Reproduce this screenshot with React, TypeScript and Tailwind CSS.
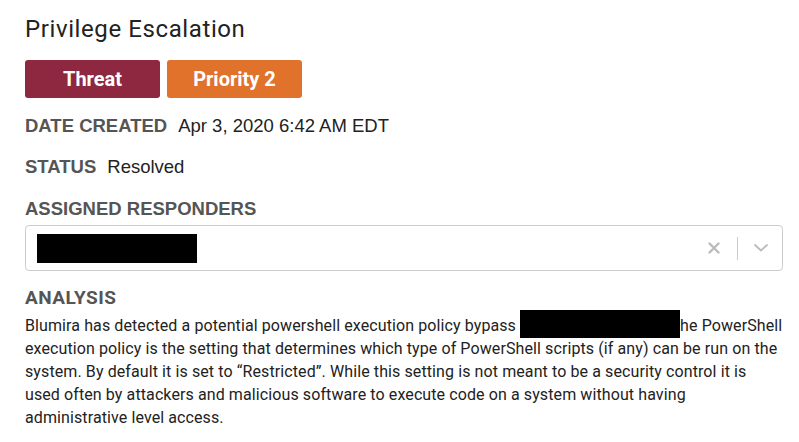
import React from "react";

const labelFont = { fontFamily: '"Liberation Sans", Arial, sans-serif' };

const Field = ({ label, value }: { label: string; value: string }) => (
  <div className="flex items-center h-[24px] gap-[11px]" style={labelFont}>
    <span className="text-[18.5px] font-bold text-[#555555]">{label}</span>
    <span className="text-[18.5px] text-[#222222]">{value}</span>
  </div>
);

export default function App() {
  const badges = [
    { name: "Threat", cls: "bg-[#8e2840]" },
    { name: "Priority 2", cls: "bg-[#e0722c]" },
  ];

  return (
    <div
      className="w-[799px] h-[442px] bg-white pl-[25px] pr-[16px] pt-[15px] overflow-hidden"
      style={{ fontFamily: "Roboto, sans-serif" }}
    >
      <h1 className="text-[24px] leading-[28px] tracking-[0.6px] text-[#222222]">
        Privilege Escalation
      </h1>

      <div className="flex gap-[7px] mt-[17px]">
        {badges.map((b) => (
          <div
            key={b.name}
            className={`${b.cls} w-[135px] h-[38px] rounded-[3px] flex items-center justify-center text-white text-[20px] font-bold`}
          >
            {b.name}
          </div>
        ))}
      </div>

      <div className="mt-[16px]">
        <Field label="DATE CREATED" value="Apr 3, 2020 6:42 AM EDT" />
      </div>
      <div className="mt-[17px]">
        <Field label="STATUS" value="Resolved" />
      </div>

      <div
        className="mt-[18px] h-[24px] flex items-center text-[18.5px] font-bold text-[#555555]"
        style={labelFont}
      >
        ASSIGNED RESPONDERS
      </div>

      <div className="mt-[4px] h-[46px] border border-[#cccccc] rounded-[4px] flex items-center pl-[11px] pr-[14px]">
        <div className="w-[160px] h-[29px] bg-black" />
        <div className="ml-auto flex items-center">
          <svg width="12" height="12" viewBox="0 0 12 12" className="mr-[17px]">
            <path
              d="M1.5 1.5 L10.5 10.5 M10.5 1.5 L1.5 10.5"
              stroke="#bbbbbb"
              strokeWidth="2.4"
              strokeLinecap="round"
            />
          </svg>
          <div className="w-px h-[23px] bg-[#cccccc] mr-[16px]" />
          <svg width="14" height="8" viewBox="0 0 14 8">
            <path
              d="M1 1 L7 6.5 L13 1"
              stroke="#bbbbbb"
              strokeWidth="1.8"
              fill="none"
              strokeLinecap="round"
              strokeLinejoin="round"
            />
          </svg>
        </div>
      </div>

      <div className="mt-[15px] h-[24px] flex items-center text-[19px] font-bold tracking-[0.5px] text-[#555555]">
        ANALYSIS
      </div>
      <p className="mt-[4px] text-[16px] leading-[23px] tracking-[0.1px] text-[#222222] whitespace-nowrap">
        Blumira has detected a potential powershell execution policy bypass{" "}
        <span className="inline-block w-[160px] h-[28px] -my-[4px] bg-black align-middle relative -top-[3px]" />
        he PowerShell
        <br />
        execution policy is the setting that determines which type of PowerShell
        scripts (if any) can be run on the
        <br />
        system. By default it is set to “Restricted”. While this setting is not
        meant to be a security control it is
        <br />
        used often by attackers and malicious software to execute code on a
        system without having
        <br />
        administrative level access.
      </p>
    </div>
  );
}
